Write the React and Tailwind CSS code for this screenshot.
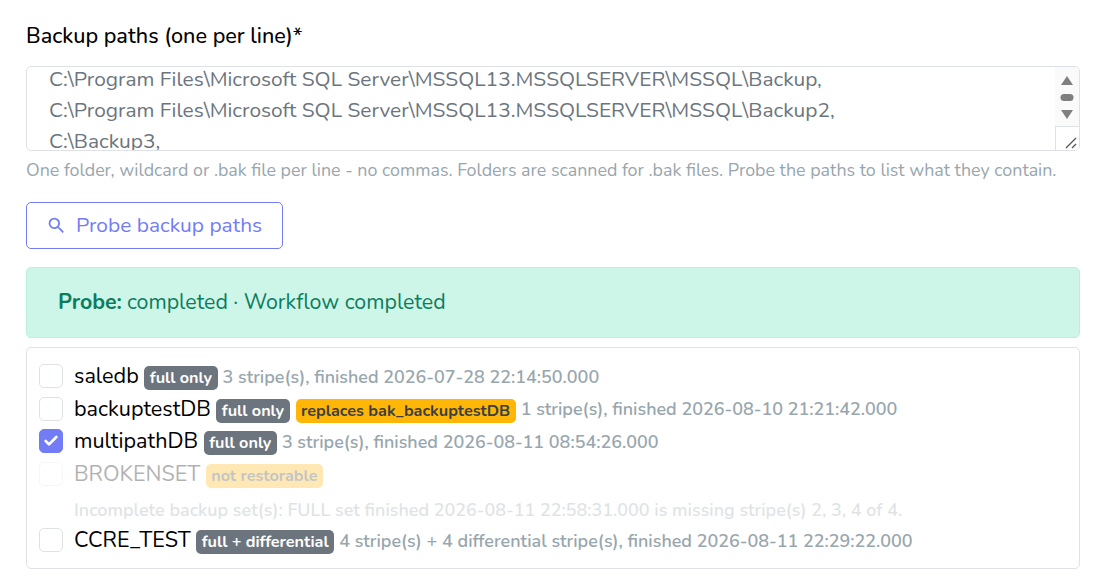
import { Check } from 'lucide-react';

const rows = [
    { name: 'saledb', badges: [{ text: 'full only' }], info: '3 stripe(s), finished 2026-07-28 22:14:50.000' },
    { name: 'backuptestDB', badges: [{ text: 'full only' }, { text: 'replaces bak_backuptestDB', warn: true }], info: '1 stripe(s), finished 2026-08-10 21:21:42.000' },
    { name: 'multipathDB', badges: [{ text: 'full only' }], info: '3 stripe(s), finished 2026-08-11 08:54:26.000', checked: true },
];

function Badge({ text, warn }) {
    return (
        <span className={`h-6 px-[5.5px] rounded-[5px] flex items-center text-[16.2px] font-bold leading-none whitespace-nowrap ${warn ? 'bg-[#ffb606] text-[#3a3f44]' : 'bg-[#6c757d] text-white'}`}>
            {text}
        </span>
    );
}

function Row({ name, badges, info, checked }) {
    return (
        <div className="h-[32.5px] flex items-center">
            <span className={`w-6 h-6 -mt-[2.5px] rounded-[5px] border shrink-0 flex items-center justify-center ${checked ? 'bg-[#727cf5] border-[#727cf5]' : 'bg-white border-[#dee2e6]'}`}>
                {checked && <Check size={16} strokeWidth={4} className="text-white" />}
            </span>
            <span className="ml-[11px] text-[21.6px] text-black leading-none">{name}</span>
            <span className="ml-[5.5px] mt-[2px] flex gap-[6px]">
                {badges.map((b) => <Badge key={b.text} {...b} />)}
            </span>
            <span className="ml-[5px] text-[17.95px] text-[#98a6ad] font-semibold whitespace-nowrap">{info}</span>
        </div>
    );
}

export default function App() {
    return (
        <div className="w-[1110px] h-[585px] bg-white overflow-hidden pl-[26px] pr-[30px] pt-[23px] font-['Nunito','Lato','Liberation_Sans',sans-serif]">
            <label className="block h-[26px] text-[21.6px] leading-[26px] font-medium text-black">Backup paths (one per line)*</label>

            <div className="mt-[17px] h-[85px] flex border border-[#dee2e6] rounded-[5px] overflow-hidden">
                <div className="flex-1 pl-[22px] text-[20.92px] leading-[30.8px] text-[#6c757d] whitespace-nowrap overflow-hidden">
                    <div className="leading-[24.8px] mb-[3px]">C:\Program Files\Microsoft SQL Server\MSSQL13.MSSQLSERVER\MSSQL\Backup,</div>
                    <div>C:\Program Files\Microsoft SQL Server\MSSQL13.MSSQLSERVER\MSSQL\Backup2,</div>
                    <div>C:\Backup3,</div>
                </div>
                <div className="w-6 bg-[#fafafa] flex flex-col">
                    <div className="flex-1 flex flex-col items-center pt-[8px]">
                        <svg width="14" height="46" viewBox="0 0 14 46" fill="#7f7f7f">
                            <path d="M7 1 L13 10 L1 10 Z" />
                            <rect x="0.5" y="19" width="13" height="7" rx="3.5" />
                            <path d="M1 35 L13 35 L7 44 Z" />
                        </svg>
                    </div>
                    <div className="h-6 border-l border-t border-[#dee2e6] bg-white flex items-end justify-end">
                        <svg width="16" height="16" viewBox="0 0 16 16" stroke="#555" strokeWidth="1.2" fill="none">
                            <path d="M3 14 L13 4" />
                            <path d="M9 14 L13 10" />
                        </svg>
                    </div>
                </div>
            </div>

            <p className="mt-[7px] h-6 text-[17.85px] leading-6 text-[#98a6ad] whitespace-nowrap">
                One folder, wildcard or .bak file per line - no commas. Folders are scanned for .bak files. Probe the paths to list what they contain.
            </p>

            <button className="mt-[20px] h-[47px] w-[257px] flex items-center pl-[19px] border border-[#727cf5] rounded-[5px] text-[20.92px] text-[#727cf5] bg-white">
                <svg width="21" height="21" viewBox="0 0 24 24" fill="currentColor">
                    <path d="M9.5,3A6.5,6.5 0 0,1 16,9.5C16,11.11 15.41,12.59 14.44,13.73L14.71,14H15.5L20.5,19L19,20.5L14,15.5V14.71L13.73,14.44C12.59,15.41 11.11,16 9.5,16A6.5,6.5 0 0,1 3,9.5A6.5,6.5 0 0,1 9.5,3M9.5,5C7,5 5,7 5,9.5C5,12 7,14 9.5,14C12,14 14,12 14,9.5C14,7 12,5 9.5,5Z" />
                </svg>
                <span className="ml-[9px]">Probe backup paths</span>
            </button>

            <div className="mt-[18px] h-[71px] flex items-center pl-[31px] bg-[#cdf5e8] border border-[#b9f0de] rounded-[5px] text-[21.35px] text-[#0a7d5e]">
                <span className="font-bold">Probe:</span>
                <span className="ml-[5px]">completed · Workflow completed</span>
            </div>

            <div className="mt-[9px] h-[222px] border border-[#dee2e6] rounded-[5px] pl-3 pt-[13px]">
                {rows.map((r) => <Row key={r.name} {...r} />)}

                <div className="opacity-30">
                    <div className="h-[32.5px] flex items-center">
                        <span className="w-6 h-6 -mt-[2.5px] rounded-[5px] border border-[#dee2e6] bg-white shrink-0"></span>
                        <span className="ml-[11px] text-[21.6px] text-black leading-none">BROKENSET</span>
                        <span className="ml-[5.5px] mt-[2px] h-6 px-[5.5px] rounded-[5px] flex items-center text-[16.2px] font-bold leading-none bg-[#ffb606] text-[#3a3f44]">not restorable</span>
                    </div>
                    <div className="h-[31px] pl-[35px] flex items-end text-[17.95px] text-[#98a6ad] font-semibold leading-[24px] whitespace-nowrap">
                        Incomplete backup set(s): FULL set finished 2026-08-11 22:58:31.000 is missing stripe(s) 2, 3, 4 of 4.
                    </div>
                </div>

                <div className="mt-[3px]">
                    <Row name="CCRE_TEST" badges={[{ text: 'full + differential' }]} info="4 stripe(s) + 4 differential stripe(s), finished 2026-08-11 22:29:22.000" />
                </div>
            </div>
        </div>
    );
}
